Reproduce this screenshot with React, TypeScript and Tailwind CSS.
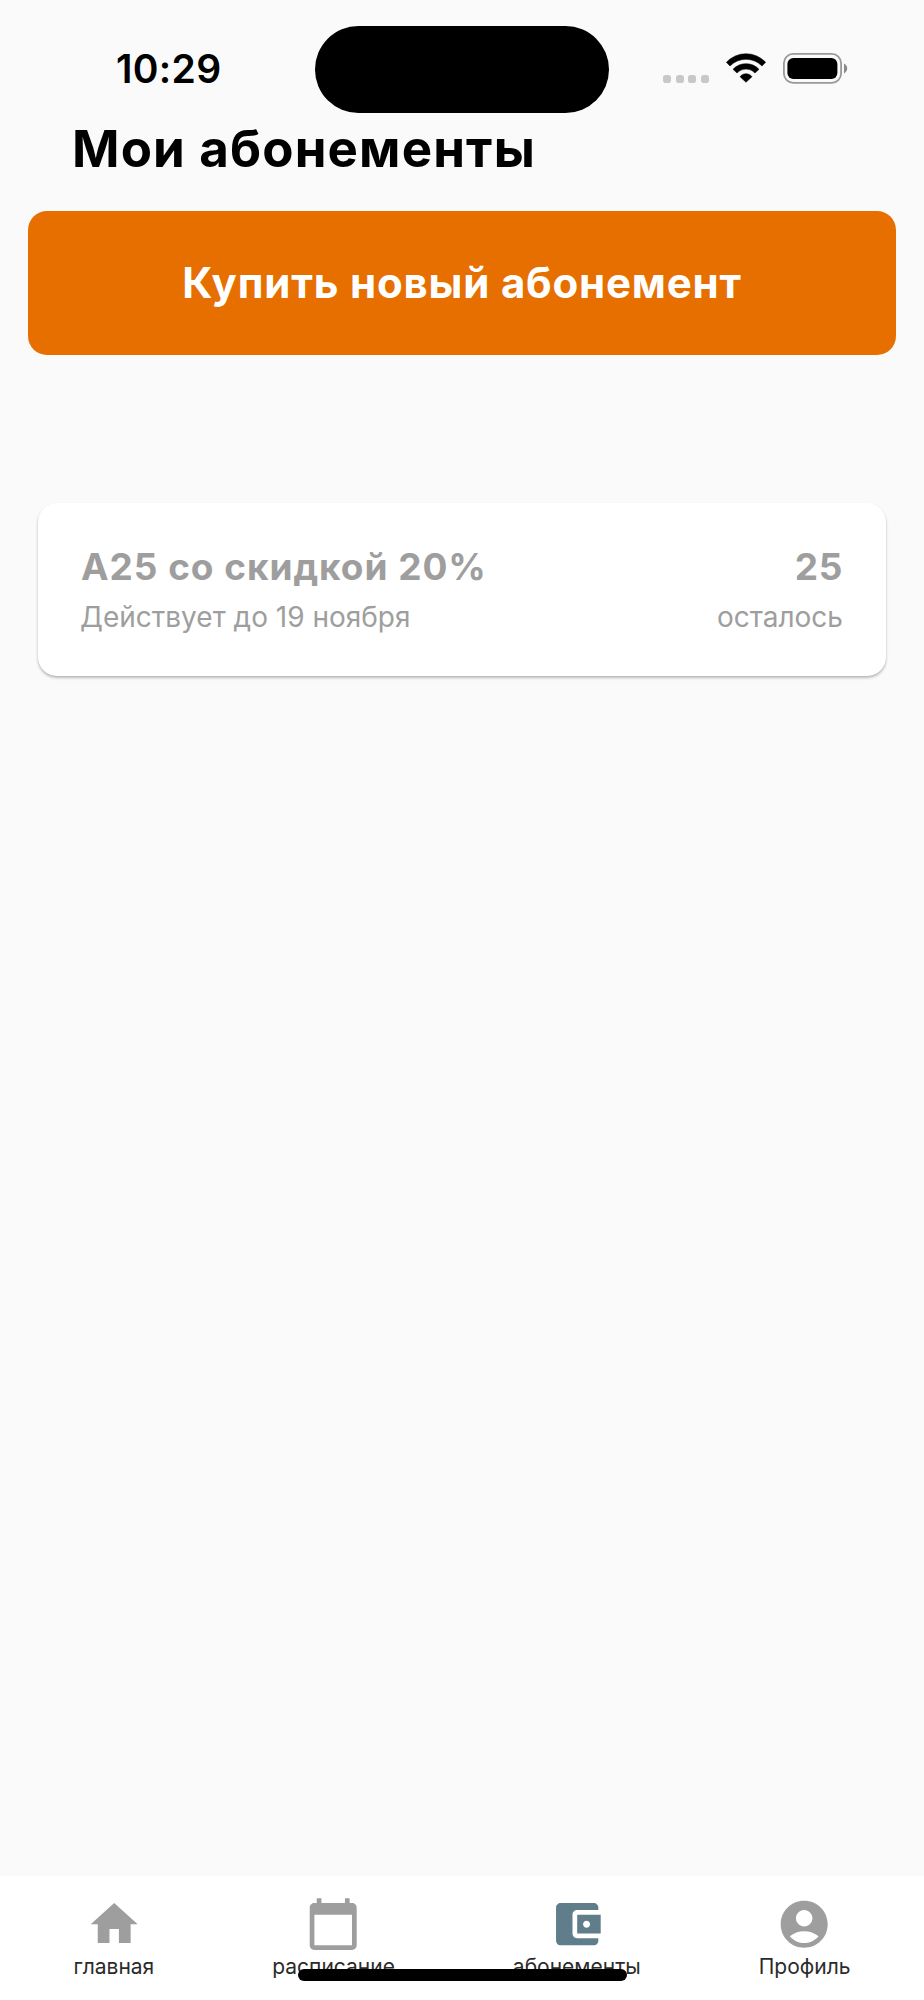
type NavItem = { label: string; path: string; active?: boolean };

const navItems: NavItem[] = [
  { label: "главная", path: "M10 20v-6h4v6h5v-8h3L12 3 2 12h3v8z" },
  {
    label: "расписание",
    path: "M20 3h-1V1h-2v2H7V1H5v2H4c-1.1 0-2 .9-2 2v16c0 1.1.9 2 2 2h16c1.1 0 2-.9 2-2V5c0-1.1-.9-2-2-2zm0 18H4V8h16v13z",
  },
  {
    label: "абонементы",
    path: "M21 18v1c0 1.1-.9 2-2 2H5c-1.11 0-2-.9-2-2V5c0-1.1.89-2 2-2h14c1.1 0 2 .9 2 2v1h-9c-1.11 0-2 .9-2 2v8c0 1.1.89 2 2 2h9zm-9-2h10V8H12v8zm4-2.5c-.83 0-1.5-.67-1.5-1.5s.67-1.5 1.5-1.5 1.5.67 1.5 1.5-.67 1.5-1.5 1.5z",
    active: true,
  },
  {
    label: "Профиль",
    path: "M12 2C6.48 2 2 6.48 2 12s4.48 10 10 10 10-4.48 10-10S17.52 2 12 2zm0 4c1.93 0 3.5 1.57 3.5 3.5S13.93 13 12 13s-3.5-1.57-3.5-3.5S10.07 6 12 6zm0 14c-2.03 0-4.43-.82-6.14-2.88C7.55 15.8 9.68 15 12 15s4.45.8 6.14 2.12C16.43 19.18 14.03 20 12 20z",
  },
];

function WifiIcon() {
  return (
    <svg
      className="ml-[17px] h-[30px] w-10"
      viewBox="0 0 120 90"
      fill="#000"
      stroke="#000"
      strokeWidth="1.5"
      strokeLinejoin="round"
    >
      <path d="M1 28A80 80 0 0 1 119 28L108 39A67.6 67.6 0 0 0 12 39Z" />
      <path d="M21 49A53 53 0 0 1 99 49L87 60A37 37 0 0 0 33 60Z" />
      <path d="M42 71A22.5 22.5 0 0 1 78 71L60 88Z" />
    </svg>
  );
}

function BatteryIcon() {
  return (
    <svg className="ml-[17px] h-[31px] w-[65px]" viewBox="0 0 65 31">
      <rect x="0.9" y="0.9" width="57.2" height="29" rx="9.4" fill="none" stroke="#999" strokeWidth="1.8" />
      <rect x="4.4" y="4.9" width="50" height="21" rx="6" fill="#000" />
      <path d="M61 10.6c2 1 3.2 2.8 3.2 4.9s-1.2 3.9-3.2 4.9z" fill="#8a8a8a" />
    </svg>
  );
}

function StatusBar() {
  return (
    <header className="flex h-[118px] items-start pt-[26.3px]">
      <div className="w-[315px] pl-[116px] text-[39px] leading-[86px] font-semibold tracking-[0.3px]">10:29</div>
      <div className="h-[86.5px] w-[294px] rounded-full bg-black" />
      <div className="flex h-[87px] items-start pt-[27px] pl-[54px]">
        <div className="mt-[21.7px] flex gap-[4.5px]">
          {[0, 1, 2, 3].map((i) => (
            <span key={i} className="size-[8px] rounded-[2.8px] bg-[#c8c8c8]" />
          ))}
        </div>
        <WifiIcon />
        <BatteryIcon />
      </div>
    </header>
  );
}

function PassCard() {
  return (
    <section className="mx-[38px] mt-[148px] flex h-[173px] justify-between rounded-[19px] bg-white pt-[39px] pr-[43px] pl-[42px] text-[#9e9e9e] shadow-[0_2px_3px_rgba(0,0,0,0.24),0_1px_2px_rgba(0,0,0,0.06)]">
      <div>
        <h2 className="pl-[1px] text-[37px] leading-[50px] font-bold tracking-[0.95px]">А25 со скидкой 20%</h2>
        <p className="text-[28px] leading-[50px]">Действует до 19 ноября</p>
      </div>
      <div className="text-right">
        <div className="text-[37px] leading-[50px] font-bold tracking-[0.7px]">25</div>
        <div className="text-[28px] leading-[50px]">осталось</div>
      </div>
    </section>
  );
}

function BottomNav() {
  return (
    <nav className="relative flex h-[124.5px] justify-between bg-white px-[73.5px] pt-[20.5px]">
      {navItems.map((item) => (
        <a key={item.label} className="flex flex-col items-center">
          <svg
            viewBox="0 0 24 24"
            className={item.active ? "size-[56.4px] fill-[#607d8b]" : "size-[56.4px] fill-[#9e9e9e]"}
          >
            <path d={item.path} />
          </svg>
          <span className="mt-[1.5px] text-[21px] leading-[26px] text-[#2b2b2b]">{item.label}</span>
        </a>
      ))}
      <div className="absolute bottom-[19px] left-[298px] h-[12px] w-[329px] rounded-full bg-black" />
    </nav>
  );
}

export default function App() {
  return (
    <div className="flex h-[2000px] w-[924px] flex-col overflow-hidden bg-[#fafafa] font-['Inter',sans-serif] text-black">
      <StatusBar />
      <main className="flex-1">
        <h1 className="h-[60px] pl-[72px] text-[51px] leading-[62px] font-bold tracking-[1.15px]">Мои абонементы</h1>
        <button className="mx-[28px] mt-[33.3px] block h-[143.5px] w-[868px] rounded-[19px] bg-[#e66f00] pb-[2px] text-[42px] font-bold tracking-[0.8px] text-white">
          Купить новый абонемент
        </button>
        <PassCard />
      </main>
      <BottomNav />
    </div>
  );
}
